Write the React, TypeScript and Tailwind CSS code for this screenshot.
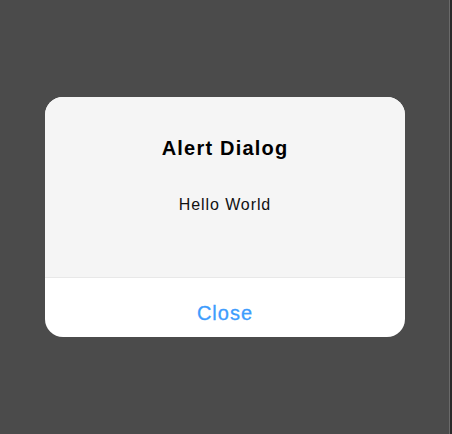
export default function App() {
  return (
    <div
      className="flex h-[434px] w-[452px] bg-[#4b4b4b]"
      style={{ fontFamily: '"Liberation Sans", Arial, sans-serif' }}
    >
      <div className="flex-1 pl-[45px] pt-[97px]">
        <div className="flex h-[240px] w-[360px] flex-col overflow-hidden rounded-[18px] bg-white">
          <div className="flex h-[180px] flex-col items-center bg-[#f5f5f5] pt-[37px]">
            <div className="text-[20px] font-bold leading-[28px] tracking-[1.2px] text-black">
              Alert Dialog
            </div>
            <div className="mt-[31px] text-[16px] leading-[24px] tracking-[0.9px] text-[#111111]">
              Hello World
            </div>
          </div>
          <div className="h-px bg-[#e8e8e8]" />
          <div className="flex flex-1 justify-center pt-[10px]">
            <button className="text-[20px] leading-[28px] tracking-[1px] text-[#3d9cfd] [-webkit-text-stroke:0.3px_#3d9cfd]">
              Close
            </button>
          </div>
        </div>
      </div>
      <div className="w-px bg-[#6a6a6a]" />
      <div className="w-[2px] bg-[#2a2a2a]" />
    </div>
  );
}
